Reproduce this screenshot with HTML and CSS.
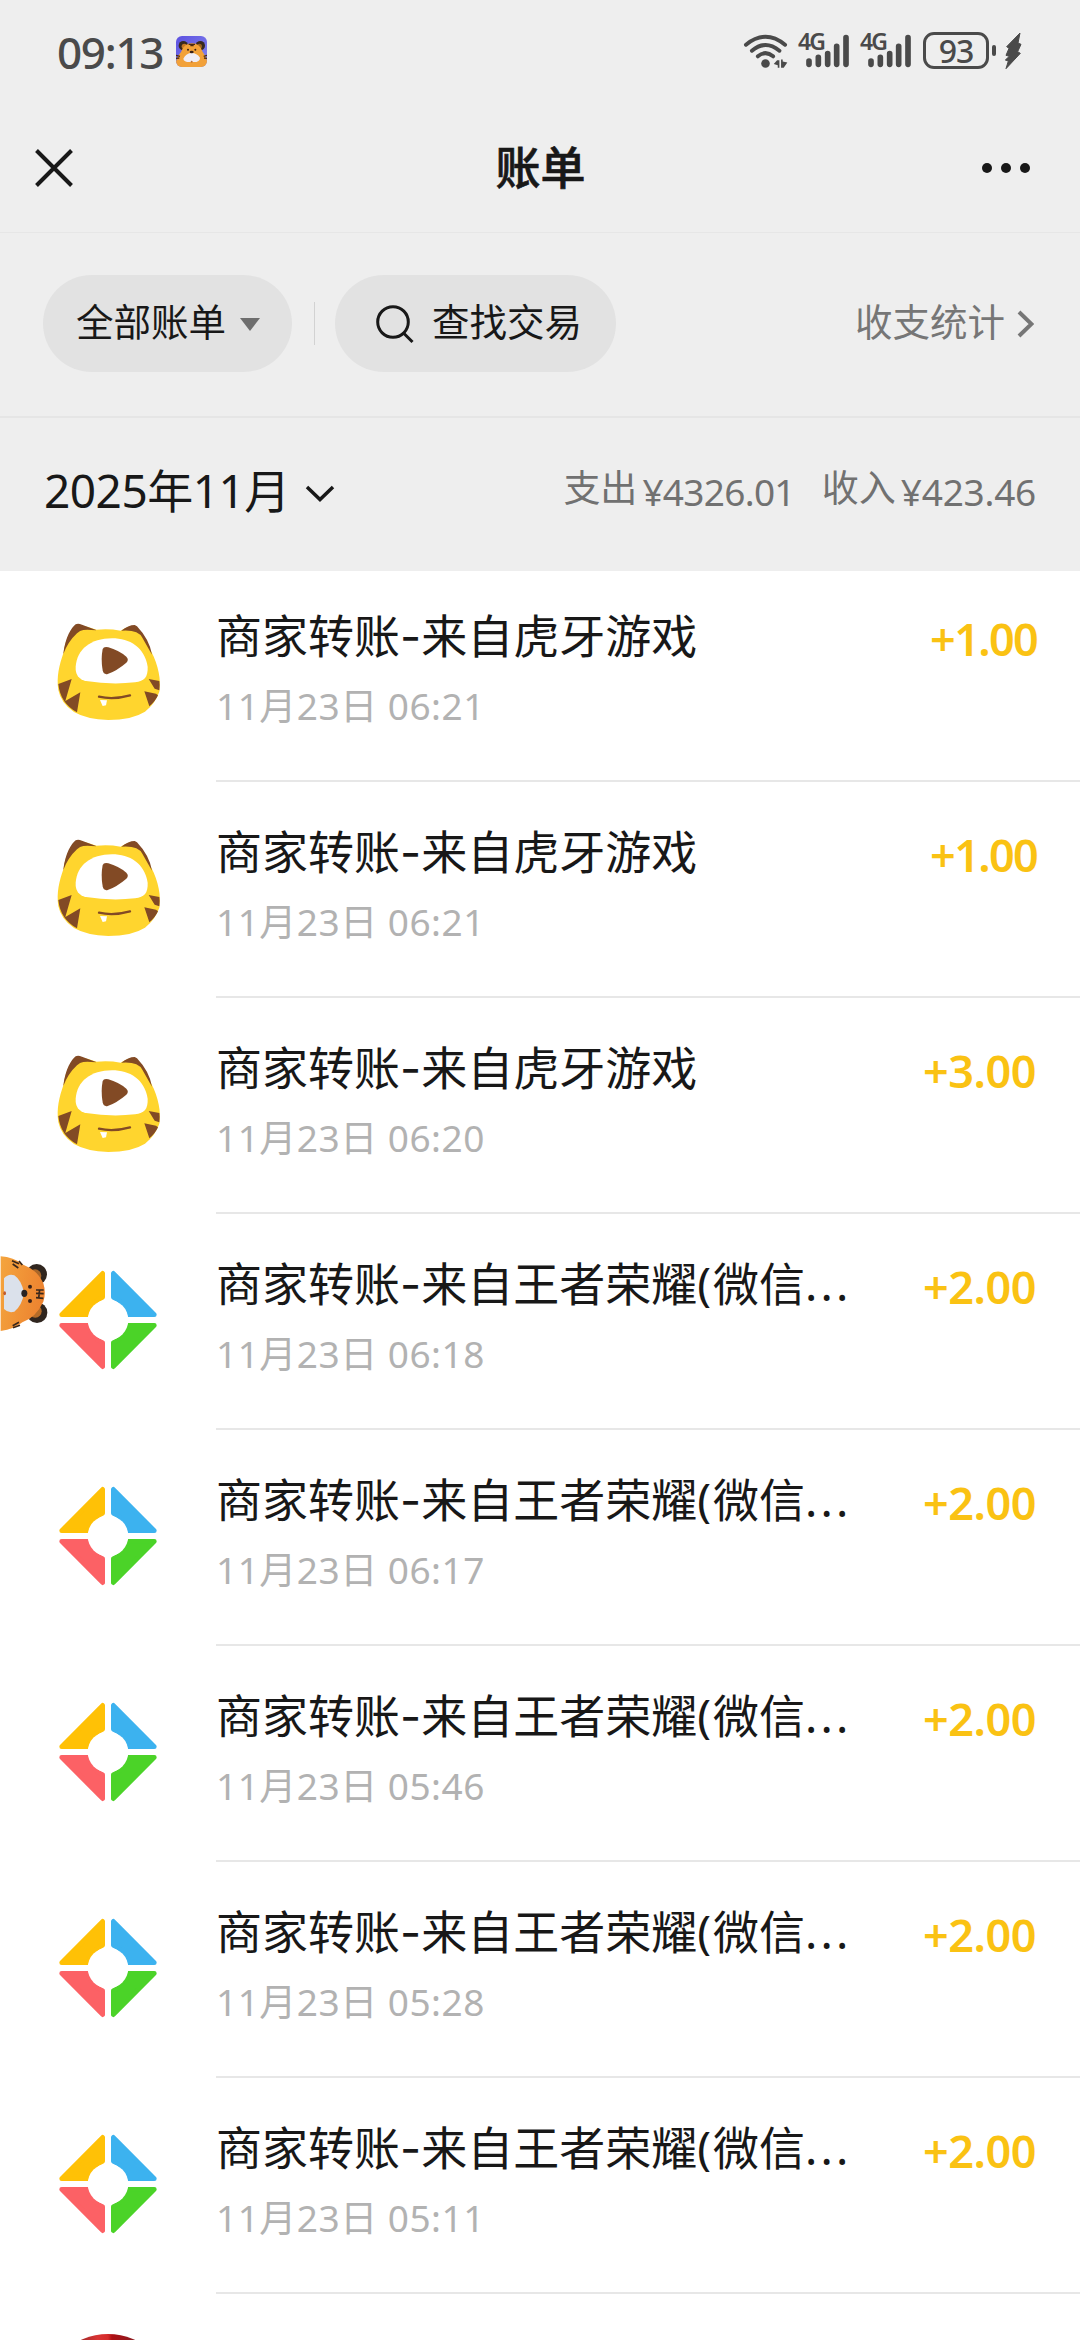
FILE: index.html
```html
<!DOCTYPE html>
<html lang="zh-CN">
<head>
<meta charset="utf-8">
<title>账单</title>
<link rel="stylesheet" href="styles.css">
</head>
<body>
<svg class="defs" aria-hidden="true">
  <symbol id="huya" viewBox="144 123 360 360">
    <path fill="#ffd52e" d="M190 250C198 205 212 175 232 166Q262 168 290 179Q326 175 362 182Q385 166 404 168Q428 188 454 245C475 285 484 330 478 365Q466 400 435 425Q395 450 325 450Q260 448 222 426Q183 400 175 360C169 320 178 285 190 250Z"/>
    <path fill="#824a25" d="M190 252C196 200 215 172 227 163Q234 159 246 164L290 181Q262 178 250 180Q240 181 231 190Q204 215 190 252ZM364 182Q385 165 404 165L411 169Q448 208 456 254L427 203Q414 178 364 182Z"/>
    <path fill="#824a25" d="M175 342L215 327L196 393L241 367L231 427Q181 400 175 342Z"/>
    <path fill="#824a25" d="M446 327L478 333Q480 346 478 361L464 356ZM433 364L468 371L474 376Q465 396 448 409Z"/>
    <path fill="#fff" d="M227 290C231 238 272 205 336 205C390 205 433 232 443 290C444 321 434 333 405 337Q333 345 258 333Q225 325 227 290Z"/>
    <path fill="#824a25" d="M308 237Q311 229 325 232Q356 241 379 260Q388 269 379 278Q351 302 323 312Q311 315 308 301Q302 267 308 237Z"/>
    <path fill="none" stroke="#824a25" stroke-width="7" stroke-linecap="round" d="M297 380Q340 390 390 376"/>
    <path fill="#fff" d="M300 390L321 391L318 406L308 408Z"/>
  </symbol>
  <symbol id="pay" viewBox="144 147 360 360">
    <g stroke-width="14" stroke-linejoin="round">
      <path fill="#ffc106" stroke="#ffc106" d="M308 190V262Q276 274 264 314H185Z"/>
      <path fill="#3cb2ef" stroke="#3cb2ef" d="M340 190V262Q372 274 384 314H463Z"/>
      <path fill="#fc6165" stroke="#fc6165" d="M308 470V398Q276 386 264 346H185Z"/>
      <path fill="#4bd328" stroke="#4bd328" d="M340 470V398Q372 386 384 346H463Z"/>
    </g>
    <circle cx="324" cy="330" r="61" fill="#fff"/>
  </symbol>
  <symbol id="signal" viewBox="0 0 150 106">
    <g stroke="#4a4a4a" stroke-width="17" stroke-linecap="round">
      <path d="M30 83V93M58 72V93M86 61V93M113 39V93M141 13V93"/>
    </g>
  </symbol>
</svg>
<main class="screen">
  <header class="status">
    <div class="status-left">
      <span class="clock">09:13</span>
      <svg class="app-badge" viewBox="0 0 93 93">
        <defs><clipPath id="bc"><rect width="93" height="93" rx="18"/></clipPath>
        <linearGradient id="bg" x2="1" y2="1"><stop stop-color="#5c50e0"/><stop offset="1" stop-color="#8588ee"/></linearGradient></defs>
        <g clip-path="url(#bc)">
          <rect width="93" height="93" fill="url(#bg)"/>
          <circle cx="22" cy="29" r="14" fill="#38291f"/><circle cx="73" cy="29" r="14" fill="#38291f"/>
          <circle cx="25" cy="31" r="8" fill="#c77725"/><circle cx="70" cy="31" r="8" fill="#9c641f"/>
          <path fill="#f2a139" d="M15 48Q24 22 48 22T80 48Q95 65 95 95H-2Q-2 66 15 48Z"/>
          <path stroke="#4b2b12" stroke-width="4" d="M38 25H57M43 29H53M0 58L12 61M0 67L10 66M93 58L83 61M93 67L84 66"/>
          <path fill="#f0edf5" d="M48 51Q62 51 72 65Q72 80 48 78Q23 80 22 68Q30 51 48 51Z"/>
          <circle cx="36" cy="41" r="3" fill="#382018"/><circle cx="58" cy="41" r="3" fill="#382018"/><ellipse cx="47" cy="48" rx="6" ry="4" fill="#382018"/><circle cx="47" cy="77" r="3" fill="#bd7135"/>
        </g>
      </svg>
    </div>
    <div class="status-right">
      <svg class="wifi" viewBox="70 96 136 108">
        <g fill="none" stroke="#4a4a4a" stroke-width="12" stroke-linecap="round">
          <path d="M79 131Q138 83 197 131M97 149Q138 115 180 149M115 166Q138 147 161 166"/>
        </g>
        <circle cx="138" cy="188" r="13" fill="#4a4a4a"/>
        <path fill="#4a4a4a" d="M163 189L173 178H180V201H175V193ZM185 176H190V182L204 185L193 201H185Z"/>
      </svg>
      <span class="cell"><svg><use href="#signal"/></svg><b>4G</b></span>
      <span class="cell"><svg><use href="#signal"/></svg><b>4G</b></span>
      <span class="battery">93</span><span class="battery-tip"></span>
      <svg class="bolt" viewBox="40 20 54 114"><path fill="#4a4a4a" stroke="#4a4a4a" stroke-width="3" stroke-linejoin="round" d="M88 23L48 64L55 69L46 90L56 93L44 104L53 107L46 130L89 84L81 79L91 57L82 53Z"/></svg>
    </div>
  </header>
  <nav class="titlebar">
    <svg class="close" viewBox="0 0 38 38"><path d="M1.5 1.5L36.500 36.500M36.500 1.500L1.500 36.500"/></svg>
    <h1>账单</h1>
    <div class="more"><i></i><i></i><i></i></div>
  </nav>
  <section class="filters">
    <div class="pill all">全部账单<i class="caret"></i></div>
    <i class="sep"></i>
    <div class="pill search"><svg class="mag" viewBox="0 0 38 38"><circle cx="17" cy="17" r="15.300"/><path d="M27.500 28L36.500 37"/></svg>查找交易</div>
    <div class="stats">收支统计<svg class="chev" viewBox="0 0 17 28"><path d="M2 2L14.500 14L2 26"/></svg></div>
  </section>
  <section class="month">
    <div class="month-name">2025年11月<svg class="down" viewBox="0 0 30 17"><path d="M2 2L15 14.500L28 2"/></svg></div>
    <div class="totals"><span class="zh">支出</span><span class="num spent">¥4326.01</span><span class="zh income">收入</span><span class="num">¥423.46</span></div>
  </section>
  <ul class="list">
    <li><svg class="logo"><use href="#huya"/></svg><div class="row"><div class="info"><p class="name">商家转账<s>-</s>来自虎牙游戏</p><p class="date">11月23日 06:21</p></div><b class="amount one">+1.00</b></div></li>
    <li><svg class="logo"><use href="#huya"/></svg><div class="row"><div class="info"><p class="name">商家转账<s>-</s>来自虎牙游戏</p><p class="date">11月23日 06:21</p></div><b class="amount one">+1.00</b></div></li>
    <li><svg class="logo"><use href="#huya"/></svg><div class="row"><div class="info"><p class="name">商家转账<s>-</s>来自虎牙游戏</p><p class="date">11月23日 06:20</p></div><b class="amount">+3.00</b></div></li>
    <li><svg class="logo"><use href="#pay"/></svg><div class="row"><div class="info"><p class="name">商家转账<s>-</s>来自王者荣耀<u>(</u>微信<em>...</em></p><p class="date">11月23日 06:18</p></div><b class="amount">+2.00</b></div></li>
    <li><svg class="logo"><use href="#pay"/></svg><div class="row"><div class="info"><p class="name">商家转账<s>-</s>来自王者荣耀<u>(</u>微信<em>...</em></p><p class="date">11月23日 06:17</p></div><b class="amount">+2.00</b></div></li>
    <li><svg class="logo"><use href="#pay"/></svg><div class="row"><div class="info"><p class="name">商家转账<s>-</s>来自王者荣耀<u>(</u>微信<em>...</em></p><p class="date">11月23日 05:46</p></div><b class="amount">+2.00</b></div></li>
    <li><svg class="logo"><use href="#pay"/></svg><div class="row"><div class="info"><p class="name">商家转账<s>-</s>来自王者荣耀<u>(</u>微信<em>...</em></p><p class="date">11月23日 05:28</p></div><b class="amount">+2.00</b></div></li>
    <li><svg class="logo"><use href="#pay"/></svg><div class="row"><div class="info"><p class="name">商家转账<s>-</s>来自王者荣耀<u>(</u>微信<em>...</em></p><p class="date">11月23日 05:11</p></div><b class="amount">+2.00</b></div></li>
    <li><svg class="logo" viewBox="0 0 120 120"><defs><linearGradient id="rg"><stop offset=".3" stop-color="#a82a2a"/><stop offset=".42" stop-color="#d93434"/><stop offset=".5" stop-color="#d52b2b"/><stop offset=".53" stop-color="#ae1014"/><stop offset=".7" stop-color="#8c1b20"/></linearGradient></defs><circle cx="60" cy="60" r="65" fill="url(#rg)"/></svg></li>
  </ul>
  <svg class="peek" viewBox="0 135 144 231">
    <defs>
      <linearGradient id="fur" x2="1" y2=".3"><stop stop-color="#f4a53e"/><stop offset="1" stop-color="#ed8430"/></linearGradient>
    </defs>
    <circle cx="110" cy="193" r="31" fill="#30261f"/><circle cx="111" cy="308" r="31" fill="#30261f"/>
    <circle cx="105" cy="197" r="19" fill="#a9672a"/><circle cx="106" cy="304" r="19" fill="#b56c28"/>
    <path fill="url(#fur)" d="M2 139Q40 141 70 164Q112 180 130 220Q139 249 130 275Q108 322 67 337Q42 358 2 363Z"/>
    <path stroke="#3a271b" stroke-width="5" fill="none" d="M36 152L57 161M38 162L55 174M57 153L67 165M38 347L57 337M39 353L60 346M108 240H131M108 250L131 251M108 263L130 265M119 238L116 266"/>
    <path fill="#dbe1eb" d="M12 205Q25 190 43 196Q65 211 72 249Q66 287 43 305Q24 310 12 297Z"/>
    <ellipse cx="73" cy="250" rx="9" ry="11" fill="#282323"/><circle cx="90" cy="230" r="6" fill="#382118"/><circle cx="90" cy="273" r="6" fill="#382118"/><ellipse cx="14" cy="250" rx="4" ry="6" fill="#c05b2e"/>
  </svg>
</main>
</body>
</html>
```
FILE: styles.css
```css
* { box-sizing: border-box; margin: 0; padding: 0; }
body { background: #fff; font-family: "Noto Sans", "Noto Sans CJK SC", sans-serif; color: #181818; }
.defs { display: block; width: 0; height: 0; }
.screen { position: relative; width: 1080px; height: 2340px; overflow: hidden; background: #fff; }

.status { height: 104px; padding: 0 59px 0 57px; display: flex; justify-content: space-between; background: #eee; color: #4a4a4a; }
.status-left { display: flex; align-items: center; gap: 13px; }
.clock { font-size: 44px; line-height: 102px; font-weight: 500; letter-spacing: -1.300px; width: 106px; white-space: nowrap; }
.app-badge { width: 31px; height: 31px; margin-top: -1px; }
.status-right { display: flex; align-items: center; margin: -3px -1px 0 0; }
.wifi { width: 45px; height: 36px; margin-right: 11px; }
.cell { position: relative; width: 50px; height: 36px; margin-right: 12px; }
.cell svg { display: block; width: 50px; height: 36px; }
.cell b { position: absolute; left: -1px; top: -4px; font: 600 23px/24px "Noto Sans", sans-serif; letter-spacing: -2px; }
.battery { width: 66px; height: 37px; border: 3px solid #4a4a4a; border-radius: 11px; text-align: center; font-size: 32px; font-weight: 500; line-height: 31px; letter-spacing: -1px; }
.battery-tip { width: 4px; height: 11px; border-radius: 2px; background: #4a4a4a; margin: 0 8px 0 3px; }
.bolt { width: 18px; height: 38px; }

.titlebar { height: 129px; padding: 0 50px 0 35px; display: flex; justify-content: space-between; align-items: center; background: #eee; border-bottom: 1px solid #e6e6e6; }
.close { width: 38px; height: 38px; }
.close path { stroke: #181818; stroke-width: 4; }
.titlebar h1 { font-size: 45px; font-weight: 500; line-height: 60px; margin-left: 26px; -webkit-text-stroke: .7px #181818; }
.more { display: flex; gap: 9px; }
.more i { width: 10px; height: 10px; border-radius: 50%; background: #181818; }

.filters { height: 185px; padding: 0 46px 2px 43px; display: flex; align-items: center; background: #eee; border-bottom: 2px solid #e5e5e5; font-size: 37.500px; }
.pill { height: 97px; border-radius: 49px; background: #e2e2e2; display: flex; align-items: center; padding-bottom: 8px; white-space: nowrap; }
.all { width: 249px; padding-left: 33px; }
.caret { margin: 9px 0 0 14px; border: 10px solid transparent; border-top: 13px solid #6e6e6e; border-bottom: 0; }
.sep { width: 1px; height: 43px; background: #d2d2d2; margin: 0 20px 0 22px; }
.search { width: 281px; padding-left: 41px; }
.mag { width: 38px; height: 38px; margin: 9px 18px 0 0; fill: none; stroke: #181818; stroke-width: 3; overflow: visible; }
.stats { margin-left: auto; color: #767676; display: flex; align-items: center; padding-bottom: 8px; }
.chev { width: 17px; height: 28px; margin: 8px 0 0 12px; fill: none; stroke: #767676; stroke-width: 4; }

.month { height: 153px; padding: 0 44px; display: flex; align-items: center; justify-content: space-between; background: #eee; }
.month-name { font-size: 46px; display: flex; align-items: center; line-height: 60px; padding-bottom: 9px; letter-spacing: -.500px; }
.down { width: 30px; height: 17px; margin: 7px 0 0 15px; fill: none; stroke: #181818; stroke-width: 3.500; }
.totals { display: flex; align-items: center; color: #717171; font-size: 37px; line-height: 50px; }
.zh { padding-bottom: 13px; margin-right: 5px; }
.income { margin-left: 27px; }
.num { letter-spacing: -.250px; padding-bottom: 6px; }
.spent { letter-spacing: -.700px; }

.list { list-style: none; }
.list li { height: 216px; display: flex; }
.list li:first-child { height: 211px; }
.list li:first-child .logo { margin-top: 40px; }
.list li:first-child .row { padding-top: 32px; }
.logo { width: 120px; height: 120px; margin: 45px 48px 0 48px; flex: none; overflow: visible; }
.row { flex: 1; display: flex; justify-content: space-between; padding: 37px 44px 0 0; border-bottom: 2px solid #e7e7e7; white-space: nowrap; }
.name { font-size: 46px; line-height: 64px; }
.name s, .name u, .name em { text-decoration: none; font-style: normal; }
.name s { font-family: Inter, sans-serif; }
.name u { letter-spacing: 2px; }
.name em { letter-spacing: 3.200px; }
.date { font-size: 37px; line-height: 50px; margin-top: 13px; color: #b2b2b2; letter-spacing: .500px; }
.amount { font-size: 45px; line-height: 64px; font-weight: 600; color: #fac213; margin-top: 4px; letter-spacing: -.500px; }
.one { letter-spacing: -1.700px; margin-right: -1px; }

.peek { position: absolute; left: 0; top: 1255px; width: 48px; height: 77px; }
```
